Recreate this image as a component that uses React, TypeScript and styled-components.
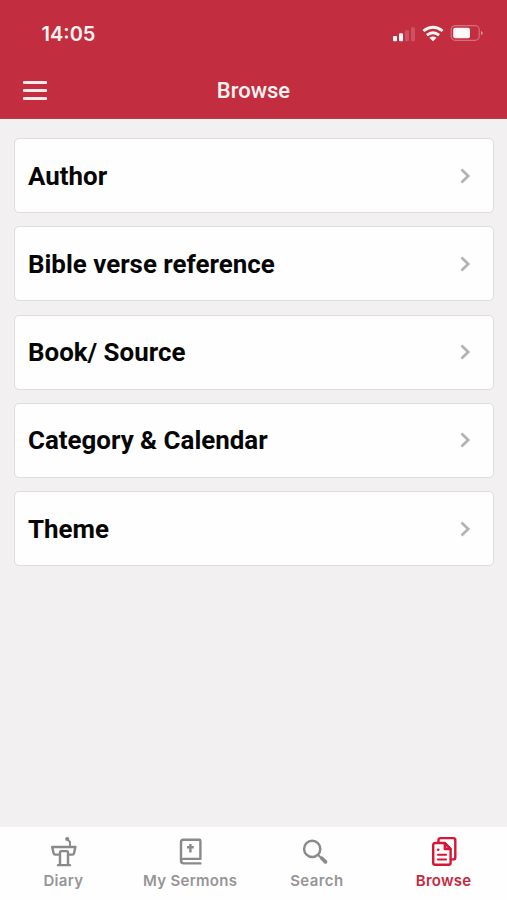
import React from "react";
import styled, { createGlobalStyle } from "styled-components";

const GlobalStyle = createGlobalStyle`
  * { box-sizing: border-box; }
  html, body { margin: 0; padding: 0; }
  body { background: #f2f0f1; font-family: Roboto, sans-serif; overflow: hidden; }
`;

const Screen = styled.div`
  width: 507px;
  height: 900px;
  display: flex;
  flex-direction: column;
  background: #f2f0f1;
`;

const Header = styled.header`
  height: 119px;
  flex: none;
  background: #c22d3f;
  color: #fff3f2;
  border-bottom: 1px solid #b93a48;
`;

const StatusBar = styled.div`
  height: 63px;
  display: flex;
  align-items: center;
  justify-content: space-between;
  padding: 4px 23px 0 41.5px;
`;

const Time = styled.span`
  font: 600 20px/24px Inter, sans-serif;
`;

const StatusIcons = styled.svg`
  display: block;
  width: 92px;
  height: 20px;
`;

const TitleBar = styled.div`
  height: 55px;
  display: grid;
  grid-template-columns: 60px 1fr 60px;
  align-items: center;
`;

const MenuButton = styled.button`
  appearance: none;
  border: 0;
  padding: 0 0 0 22.5px;
  background: none;
  height: 19px;
  display: flex;
  flex-direction: column;
  justify-content: space-between;
`;

const MenuLine = styled.span`
  width: 24.5px;
  height: 3px;
  border-radius: 1px;
  background: #fbe9e9;
`;

const Title = styled.h1`
  margin: 0;
  text-align: center;
  font: 500 22px/26px Roboto, sans-serif;
`;

const List = styled.main`
  flex: 1;
  display: flex;
  flex-direction: column;
  gap: 13.2px;
  padding: 19.3px 13px 0 14px;
`;

const Card = styled.button`
  appearance: none;
  width: 100%;
  height: 75px;
  flex: none;
  display: flex;
  align-items: center;
  justify-content: space-between;
  padding: 0 22px 0 13px;
  background: #fefefe;
  border: 1px solid #dedcdd;
  border-radius: 5px;
  color: #060606;
  text-align: left;
`;

const CardLabel = styled.span`
  font: 700 25.9px/30px Roboto, sans-serif;
`;

const Chevron = styled.svg`
  width: 12px;
  height: 16px;
  fill: none;
  stroke: #b4b2b3;
  stroke-width: 2.7;
`;

const TabBar = styled.nav`
  height: 73px;
  flex: none;
  display: grid;
  grid-template-columns: repeat(4, 1fr);
  background: #fefefe;
`;

const Tab = styled.button<{ $active?: boolean }>`
  appearance: none;
  border: 0;
  background: none;
  padding: 7px 0 0;
  display: flex;
  flex-direction: column;
  align-items: center;
  justify-content: flex-start;
  gap: 4px;
  color: ${(p) => (p.$active ? "#c5283d" : "#979596")};
`;

const TabIcon = styled.svg<{ $active?: boolean }>`
  width: 32px;
  height: 34px;
  fill: none;
  stroke: ${(p) => (p.$active ? "#d81535" : "#8b898a")};
  stroke-width: 2.4;
  stroke-linejoin: round;
  stroke-linecap: round;
`;

const TabLabel = styled.span<{ $tracking: number }>`
  font: 600 15px/18px Inter, sans-serif;
  letter-spacing: ${(p) => p.$tracking}px;
`;

const items = [
  "Author",
  "Bible verse reference",
  "Book/ Source",
  "Category & Calendar",
  "Theme",
];

const tabs = [
  {
    label: "Diary",
    tracking: 0.3,
    icon: (
      <>
        <circle cx="20.2" cy="5" r="2.1" fill="#8b898a" stroke="none" />
        <path d="M20.5 5.5 23 8v4.5" strokeWidth="1.9" />
        <path d="M11.2 20.6H8.2q-1.3 0-1.6-1.3L5.2 13H28.4L27 19.3q-.3 1.3-1.6 1.3h-3" />
        <path d="M11 31.1h12M13 31V18.4q0-1.3 1.3-1.3h5.4q1.3 0 1.3 1.3V31" />
      </>
    ),
  },
  {
    label: "My Sermons",
    tracking: 0.3,
    icon: (
      <>
        <path d="M26.4 29.4H9.8q-2.8 0-2.8-2.8V8q0-2.3 2.3-2.3h15.9q1.2 0 1.2 1.2v18H9.8q-2.8 0-2.8 2.2" />
        <path d="M16.4 10v8.6M13 13.2h6.8" strokeWidth="2.4" strokeLinecap="butt" />
      </>
    ),
  },
  {
    label: "Search",
    tracking: 0.4,
    icon: (
      <>
        <circle cx="11.2" cy="14.9" r="8.1" strokeWidth="2.4" />
        <path d="m17.2 21 3 3" strokeWidth="2" />
        <path d="m20.8 24.2 3.7 3.7" strokeWidth="3.7" />
      </>
    ),
  },
  {
    label: "Browse",
    tracking: 0.25,
    active: true,
    icon: (
      <>
        <path d="M10.5 8V6.1q0-2 2-2h12.8q2 0 2 2v17.3q0 2-2 2H23" />
        <path d="M16.8 9H7.2q-2 0-2 2v17.8q0 2 2 2h13.4q2 0 2-2V15z" />
        <path d="M16.8 9v6h5.8z" fill="#ef9ba7" />
        <path d="M10 20.7h8M10 25.5h8" strokeWidth="2.1" />
        <circle cx="10.2" cy="15.8" r="1.3" fill="#d81535" stroke="none" />
      </>
    ),
  },
];

export default function App() {
  return (
    <>
      <GlobalStyle />
      <Screen>
        <Header>
          <StatusBar>
            <Time>14:05</Time>
            <StatusIcons viewBox="0 0 92 20" fill="#fff8f7">
              <rect x="1" y="14.7" width="4" height="5.3" rx="1" transform="translate(0 -2.7)" />
              <rect x="7" y="9.3" width="4" height="8" rx="1" />
              <rect x="13" y="6.3" width="4" height="11" rx="1" opacity=".18" />
              <rect x="19" y="3.3" width="4" height="14" rx="1" opacity=".18" />
              <g fill="none" stroke="#fff8f7" strokeWidth="2.8">
                <path d="M31.4 7q9.6-7.6 19.2 0" />
                <path d="M34.9 11.1q6.1-4.8 12.2 0" />
              </g>
              <path d="m37.4 13.8 3.6 3.5 3.6-3.5q-3.6-2.5-7.2 0z" />
              <rect x="59.2" y="1.7" width="28" height="14.6" rx="4" fill="none" stroke="#fff" strokeOpacity=".32" strokeWidth="1.2" />
              <rect x="61.2" y="3.8" width="16.8" height="10.4" rx="2" />
              <path d="M89 6.7q3.5 2.3 0 4.6z" opacity=".5" />
            </StatusIcons>
          </StatusBar>
          <TitleBar>
            <MenuButton aria-label="Menu">
              <MenuLine />
              <MenuLine />
              <MenuLine />
            </MenuButton>
            <Title>Browse</Title>
          </TitleBar>
        </Header>
        <List>
          {items.map((label) => (
            <Card key={label}>
              <CardLabel>{label}</CardLabel>
              <Chevron viewBox="0 0 12 16">
                <path d="m2.5 1.6 6.7 6.4-6.7 6.4" />
              </Chevron>
            </Card>
          ))}
        </List>
        <TabBar>
          {tabs.map(({ label, tracking, active, icon }) => (
            <Tab key={label} $active={active}>
              <TabIcon viewBox="0 0 32 34" $active={active}>{icon}</TabIcon>
              <TabLabel $tracking={tracking}>{label}</TabLabel>
            </Tab>
          ))}
        </TabBar>
      </Screen>
    </>
  );
}
